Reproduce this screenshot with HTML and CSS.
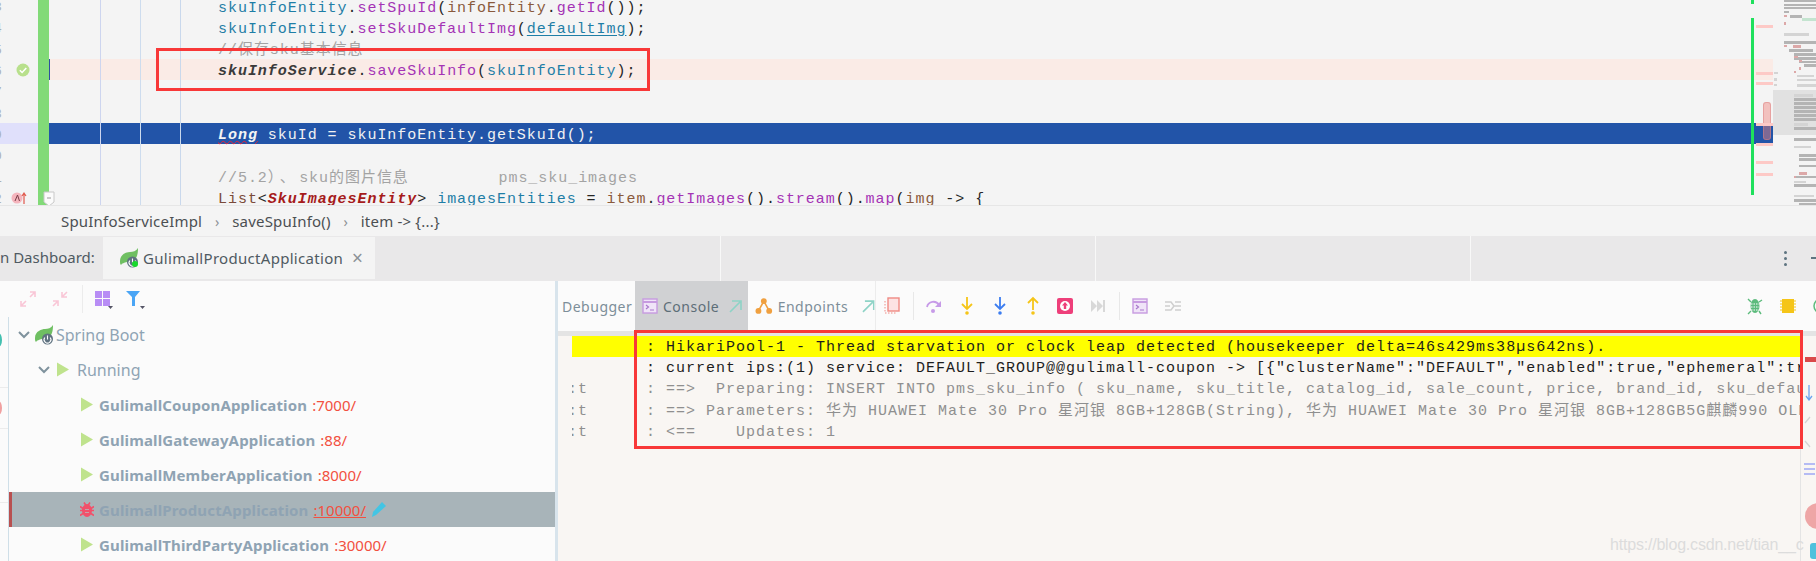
FILE: index.html
```html
<!DOCTYPE html>
<html lang="en">
<head>
<meta charset="utf-8">
<title>IDE debug session</title>
<link rel="stylesheet" href="styles.css">
</head>
<body>
<svg class="defs" width="0" height="0" aria-hidden="true">
  <defs>
    <symbol id="spring" viewBox="0 0 20 20">
      <path d="M1 13C1 6 8 4 11 4C14 4 17 3 19 0C19 6 18 10 15 12L8 14C5 15 3 15 2 17C1 16 1 15 1 13Z" fill="#6fbf62"/>
      <circle cx="13.5" cy="14" r="5.5" fill="#5f7280"/>
      <path d="M10.8 12.5a3.4 3.4 0 1 0 5.4 0M13.5 10.5v4" fill="none" stroke="#fff" stroke-width="1.1"/>
    </symbol>
    <symbol id="play" viewBox="0 0 14 16"><path d="M1 1L13 8L1 15Z" fill="#bfe38d"/></symbol>
    <symbol id="term" viewBox="0 0 16 16">
      <rect x="1" y="1" width="14" height="14" fill="#f0e4f8" stroke="#c79be0" stroke-width="1.4"/>
      <path d="M1 4h14" stroke="#c79be0" stroke-width="2"/>
      <path d="M4 7l2.5 2L4 11M8 12h4" fill="none" stroke="#a878cc" stroke-width="1.2"/>
    </symbol>
    <symbol id="pin" viewBox="0 0 14 14"><path d="M2 13L12 3M4 2h9v9" fill="none" stroke="#8ed3c6" stroke-width="1.6"/></symbol>
  </defs>
</svg>

<div class="app">
  <section class="editor">
    <div class="code">
      <div class="line"><span class="gutter"><span class="num">3</span></span><span class="change"></span><span class="src"><span class="id">skuInfoEntity</span>.<span class="fn">setSpuId</span>(<span class="var">infoEntity</span>.<span class="fn">getId</span>());</span></div>
      <div class="line"><span class="gutter"><span class="num">4</span></span><span class="change"></span><span class="src"><span class="id">skuInfoEntity</span>.<span class="fn">setSkuDefaultImg</span>(<span class="id link">defaultImg</span>);</span></div>
      <div class="line"><span class="gutter"><span class="num">5</span></span><span class="change"></span><span class="src"><span class="cmt">//保存sku基本信息</span></span></div>
      <div class="line is-break"><span class="gutter"><span class="num">6</span>
        <svg class="check" viewBox="0 0 14 14" width="14" height="14"><circle cx="7" cy="7" r="6.5" fill="#b8e08c"/><path d="M3.8 7.2l2.3 2.3 4.2-4.6" fill="none" stroke="#fff" stroke-width="1.5"/></svg>
      </span><span class="change"></span><span class="src"><i class="field">skuInfoService</i>.<span class="fn">saveSkuInfo</span>(<span class="id">skuInfoEntity</span>);</span></div>
      <div class="line"><span class="gutter"><span class="num">7</span></span><span class="change"></span><span class="src"></span></div>
      <div class="line"><span class="gutter"><span class="num">8</span></span><span class="change"></span><span class="src"></span></div>
      <div class="line is-current"><span class="gutter"><span class="num">9</span></span><span class="change"></span><span class="src"><i class="long">Long</i> skuId = skuInfoEntity.getSkuId();</span></div>
      <div class="line"><span class="gutter"><span class="num">0</span></span><span class="change"></span><span class="src"></span></div>
      <div class="line"><span class="gutter"><span class="num">1</span></span><span class="change"></span><span class="src"><span class="cmt">//5.2<span class="wide">）、</span>sku的图片信息         pms_sku_images</span></span></div>
      <div class="line"><span class="gutter"><span class="num">2</span>
        <svg class="lambda" viewBox="0 0 16 14" width="16" height="14"><circle cx="6" cy="7" r="5.5" fill="#f5b5bd"/><path d="M4 10l2.5-6 2 6" fill="none" stroke="#7a3b46" stroke-width="1"/><path d="M13 13V3M11 5l2-3 2 3" fill="none" stroke="#e0584c" stroke-width="1.2"/></svg>
      </span><span class="change"></span><span class="src"><span class="list">List</span>&lt;<i class="type">SkuImagesEntity</i>&gt; <span class="id">imagesEntities</span> = <span class="var">item</span>.<span class="fn">getImages</span>().<span class="fn">stream</span>().<span class="fn">map</span>(<span class="var">img</span> -&gt; {</span></div>
      <span class="guide guide-a"></span><span class="guide guide-b"></span><span class="guide guide-c"></span>
      <svg class="fold" viewBox="0 0 12 16" width="12" height="16"><path d="M1 1h10v10l-5 4-5-4Z" fill="#fbfbfb" stroke="#c8c8c8"/><path d="M4 7h4" stroke="#999"/></svg>
      <span class="thumb"></span>
      <span class="vcs"></span><span class="vcs vcs-top"></span>
      <span class="mark m1"></span><span class="mark m2"></span><span class="mark m3"></span><span class="mark m4"></span><span class="mark m5"></span><span class="mark m6"></span><span class="mark m7"></span>
    </div>
    <svg class="minimap" viewBox="0 0 43 206" width="43" height="206" aria-hidden="true">
      <rect y="90" width="43" height="45" fill="#e1e1e1"/>
      <g fill="#b4b4b4">
        <rect x="11" y="0" width="32" height="2"/><rect x="11" y="4" width="32" height="2"/><rect x="11" y="7" width="32" height="2"/>
        <rect x="11" y="11" width="5" height="2"/><rect x="17" y="15" width="12" height="3"/><rect x="11" y="41" width="32" height="3"/>
        <rect x="16" y="49" width="24" height="3"/><rect x="21" y="53" width="22" height="3"/><rect x="21" y="57" width="22" height="3"/>
        <rect x="26" y="61" width="17" height="2"/><rect x="31" y="64" width="12" height="3"/>
        <rect x="21" y="98" width="22" height="3"/><rect x="21" y="102" width="22" height="3"/><rect x="21" y="106" width="22" height="3"/>
        <rect x="21" y="110" width="22" height="3"/><rect x="21" y="114" width="22" height="3"/><rect x="21" y="118" width="22" height="3"/><rect x="21" y="127" width="22" height="3"/>
        <rect x="21" y="138" width="22" height="3"/><rect x="26" y="154" width="17" height="3"/><rect x="26" y="158" width="17" height="3"/><rect x="26" y="165" width="17" height="2"/>
        <rect x="21" y="176" width="22" height="2"/><rect x="21" y="184" width="22" height="3"/><rect x="21" y="199" width="22" height="3"/><rect x="26" y="203" width="17" height="3"/>
      </g>
      <g fill="#d4d4d4">
        <rect x="11" y="33" width="25" height="3"/><rect x="1" y="72" width="4" height="2"/><rect x="24" y="75" width="17" height="2"/>
        <rect x="1" y="78" width="3" height="3"/><rect x="24" y="79" width="19" height="2"/><rect x="1" y="84" width="3" height="2"/><rect x="24" y="84" width="19" height="3"/>
        <rect x="21" y="94" width="19" height="3"/><rect x="21" y="123" width="14" height="3"/><rect x="21" y="146" width="17" height="2"/><rect x="21" y="181" width="12" height="2"/><rect x="21" y="195" width="20" height="2"/>
      </g>
      <g fill="#dca8a8">
        <rect x="11" y="15" width="3" height="2"/><rect x="11" y="22" width="2" height="3"/><rect x="11" y="45" width="3" height="2"/><rect x="20" y="45" width="8" height="3"/>
        <rect x="21" y="56" width="4" height="2"/><rect x="26" y="60" width="3" height="2"/><rect x="26" y="67" width="2" height="3"/><rect x="21" y="71" width="2" height="2"/><rect x="26" y="172" width="8" height="3"/><rect x="21" y="176" width="2" height="2"/>
      </g>
      <rect x="29" y="18" width="14" height="3" fill="#c4e4d0"/>
    </svg>
  </section>

  <nav class="crumbs">
    <span>SpuInfoServiceImpl</span><b class="sep">›</b><span>saveSpuInfo()</span><b class="sep">›</b><span>item -&gt; {...}</span>
  </nav>

  <header class="tabs">
    <span class="dash-label">n Dashboard:</span>
    <div class="tab">
      <span class="spring-wrap"><svg class="ico-spring" width="20" height="20"><use href="#spring"/></svg><span class="live"></span></span>
      <span>GulimallProductApplication</span>
      <span class="tab-x">×</span>
    </div>
    <span class="kebab"><i></i><i></i><i></i></span>
    <span class="minimize"></span>
    <span class="tab-rule r1"></span><span class="tab-rule r2"></span><span class="tab-rule r3"></span>
  </header>

  <main class="bottom">
    <aside class="services">
      <div class="svc-bar">
        <svg width="20" height="20" viewBox="0 0 20 20" class="svc-ico"><path d="M3 17l5-5M3 12v5h5M17 3l-5 5M12 3h5v5" fill="none" stroke="#f9c6d6" stroke-width="1.6"/></svg>
        <svg width="20" height="20" viewBox="0 0 20 20" class="svc-ico ml12"><path d="M3 17l5-5M3 12h5v5M17 3l-5 5M12 3v5h5" fill="none" stroke="#f9c6d6" stroke-width="1.6"/></svg>
        <span class="svc-div"></span>
        <svg width="20" height="20" viewBox="0 0 20 20" class="svc-ico"><rect x="2" y="2" width="7" height="7" fill="#b88df5"/><rect x="10" y="2" width="7" height="7" fill="#b88df5"/><rect x="2" y="10" width="7" height="7" fill="#b88df5"/><rect x="10" y="10" width="7" height="7" fill="#b88df5"/><path d="M15 17h5l-2.500 3Z" fill="#556"/></svg>
        <svg width="20" height="20" viewBox="0 0 20 20" class="svc-ico ml12"><path d="M1 2h14l-5 6v9H7V8Z" fill="#4aa5f5"/><path d="M15 17h5l-2.500 3Z" fill="#556"/></svg>
      </div>
      <div class="svc-body">
        <div class="stripe"><span class="bit teal"></span><span class="bit red"></span></div>
        <ul class="tree">
          <li class="node lv0"><svg class="chev" width="12" height="8" viewBox="0 0 12 8"><path d="M1 1l5 5 5-5" fill="none" stroke="#7f929d" stroke-width="2"/></svg><svg class="ico-spring" width="20" height="20"><use href="#spring"/></svg><span class="node-t">Spring Boot</span></li>
          <li class="node lv1"><svg class="chev" width="12" height="8" viewBox="0 0 12 8"><path d="M1 1l5 5 5-5" fill="none" stroke="#7f929d" stroke-width="2"/></svg><svg class="ico-play" width="14" height="17"><use href="#play"/></svg><span class="node-t">Running</span></li>
          <li class="node lv2"><svg class="ico-play" width="14" height="17"><use href="#play"/></svg><span class="app-name">GulimallCouponApplication</span><span class="port">:7000/</span></li>
          <li class="node lv2"><svg class="ico-play" width="14" height="17"><use href="#play"/></svg><span class="app-name">GulimallGatewayApplication</span><span class="port">:88/</span></li>
          <li class="node lv2"><svg class="ico-play" width="14" height="17"><use href="#play"/></svg><span class="app-name">GulimallMemberApplication</span><span class="port">:8000/</span></li>
          <li class="node lv2 is-selected">
            <svg class="ico-play" width="14" height="17" viewBox="0 0 14 16"><path d="M0 5l3 2M14 5l-3 2M0 9h3M14 9h-3M0 14l3-2M14 14l-3-2M4 1l2 3M10 1l-2 3" stroke="#f2506a" stroke-width="1.6"/><ellipse cx="7" cy="9" rx="5" ry="6.500" fill="#f2506a"/><path d="M5 8h4M5 11h4" stroke="#c8a0a8"/></svg>
            <span class="app-name">GulimallProductApplication</span><span class="port port-link">:10000/</span>
            <svg class="pencil" width="16" height="17" viewBox="0 0 16 17"><path d="M1 16l1-5L11 1l4 4-10 9Z" fill="#43c5e4"/></svg>
          </li>
          <li class="node lv2"><svg class="ico-play" width="14" height="17"><use href="#play"/></svg><span class="app-name">GulimallThirdPartyApplication</span><span class="port">:30000/</span></li>
        </ul>
      </div>
    </aside>

    <section class="session">
      <div class="dbg-bar">
        <span class="dbg-tab t-debugger">Debugger</span>
        <span class="dbg-tab t-console"><svg width="16" height="16"><use href="#term"/></svg><span class="dbg-t">Console</span><svg class="pin" width="14" height="14"><use href="#pin"/></svg></span>
        <span class="dbg-tab t-endpoints">
          <svg width="18" height="18" viewBox="0 0 18 18"><circle cx="9" cy="4" r="3" fill="#f0a040"/><circle cx="3.500" cy="14" r="3" fill="#f0a040"/><circle cx="14.500" cy="14" r="3" fill="#f0a040"/><path d="M9 4L3.500 14M9 4l5.500 10" stroke="#f0a040" stroke-width="1.600"/></svg>
          <span class="dbg-t">Endpoints</span><svg class="pin pin2" width="14" height="14"><use href="#pin"/></svg></span>
        <span class="btn"><svg width="18" height="18" viewBox="0 0 18 18"><rect x="5" y="1" width="11" height="13" fill="#fde3e3" stroke="#ef8a84" stroke-width="1.400"/><path d="M2 4v12h12" fill="none" stroke="#ef8a84" stroke-dasharray="1.500 1.500"/></svg></span>
        <span class="bar-div"></span>
        <span class="btn"><svg width="18" height="16" viewBox="0 0 18 16"><path d="M2 9a6.500 6.500 0 0 1 12-2" fill="none" stroke="#c79be8" stroke-width="1.800"/><path d="M16 3v6h-6Z" fill="#c79be8"/><circle cx="8" cy="13" r="2" fill="#c79be8"/></svg></span>
        <span class="btn"><svg width="14" height="20" viewBox="0 0 14 20"><path d="M7 1v11M2 8l5 5 5-5" fill="none" stroke="#f5c518" stroke-width="1.800"/><circle cx="7" cy="17" r="1.800" fill="#f5c518"/></svg></span>
        <span class="btn"><svg width="14" height="20" viewBox="0 0 14 20"><path d="M7 1v11M2 8l5 5 5-5" fill="none" stroke="#3c7df0" stroke-width="1.800"/><circle cx="7" cy="17" r="1.800" fill="#3c7df0"/></svg></span>
        <span class="btn"><svg width="14" height="20" viewBox="0 0 14 20"><path d="M7 14V3M2 7l5-5 5 5" fill="none" stroke="#f5c518" stroke-width="1.800"/><circle cx="7" cy="17" r="1.800" fill="#f5c518"/></svg></span>
        <span class="btn"><svg width="16" height="16" viewBox="0 0 16 16"><rect width="16" height="16" rx="2" fill="#ee3f7a"/><circle cx="8" cy="8" r="5" fill="#fff"/><path d="M8 4l3 3.500H9.200V11H6.800V7.500H5Z" fill="#ee3f7a"/></svg></span>
        <span class="btn"><svg width="14" height="14" viewBox="0 0 14 14"><path d="M0 1l6 6-6 6ZM6 1l6 6-6 6Z" fill="#d8d8d8"/><rect x="12" y="1" width="2" height="12" fill="#d8d8d8"/></svg></span>
        <span class="bar-div"></span>
        <span class="btn"><svg width="16" height="16"><use href="#term"/></svg></span>
        <span class="btn"><svg width="16" height="14" viewBox="0 0 16 14"><path d="M0 3h6l3 4h7M0 11h6l3-4M10 3h6M10 11h6M0 7h5" fill="none" stroke="#cfcfcf" stroke-width="1.500"/></svg></span>
        <span class="bar-right">
          <span class="btn"><svg width="16" height="20" viewBox="0 0 16 20"><ellipse cx="8" cy="10" rx="4.500" ry="7" fill="#5cbb7c"/><path d="M4 6l-3-3M12 6l3-2M4 15l-3 3M12 15l2 3" stroke="#5cbb7c" stroke-width="1.400"/><path d="M4 8h8M4 11h8M4 14h8" stroke="#fff" stroke-dasharray="1.500 1"/></svg></span>
          <span class="btn"><svg width="16" height="16" viewBox="0 0 16 16"><rect x="2" y="1" width="12" height="14" fill="#f5c518"/><path d="M0 3h2M0 6h2M0 9h2M0 12h2M14 3h2M14 6h2M14 9h2M14 12h2" stroke="#f5c518"/></svg></span>
          <span class="btn"><svg width="16" height="16" viewBox="0 0 16 16"><circle cx="8" cy="8" r="7" fill="none" stroke="#5cbb7c" stroke-width="1.500"/><path d="M8 4v4l3 2" fill="none" stroke="#5cbb7c"/></svg></span>
        </span>
      </div>
      <div class="console">
        <div class="log-wrap">
          <pre class="log hit"><span class="pref"></span>: HikariPool-1 - Thread starvation or clock leap detected (housekeeper delta=46s429ms38µs642ns).</pre>
          <pre class="log"><span class="pref"></span>: current ips:(1) service: DEFAULT_GROUP@@gulimall-coupon -&gt; [{"clusterName":"DEFAULT","enabled":true,"ephemeral":true</pre>
          <pre class="log dim"><span class="pref">:t</span>: ==&gt;  Preparing: INSERT INTO pms_sku_info ( sku_name, sku_title, catalog_id, sale_count, price, brand_id, sku_default_img</pre>
          <pre class="log dim"><span class="pref">:t</span>: ==&gt; Parameters: 华为 HUAWEI Mate 30 Pro 星河银 8GB+128GB(String), 华为 HUAWEI Mate 30 Pro 星河银 8GB+128GB5G麒麟990 OLED</pre>
          <pre class="log dim"><span class="pref">:t</span>: &lt;==    Updates: 1</pre>
        </div>
        <div class="side">
          <span class="side-red"></span>
          <svg class="side-ico" width="8" height="16" viewBox="0 0 8 16"><path d="M4 0v14M1 11l3 4 3-4" fill="none" stroke="#6aa5f0" stroke-width="1.300"/></svg>
          <svg class="side-ico" width="10" height="10" viewBox="0 0 10 10"><path d="M1 8l5-6" fill="none" stroke="#d4d4d4" stroke-width="1.300"/></svg>
          <svg class="side-ico" width="10" height="10" viewBox="0 0 10 10"><path d="M1 2l5 6" fill="none" stroke="#d4d4d4" stroke-width="1.300"/></svg>
          <svg class="side-ico" width="12" height="12" viewBox="0 0 12 12"><path d="M1 1h11M1 6h11M1 11h11" stroke="#9ea8f5" stroke-width="1.500"/></svg>
          <span class="side-dot"></span>
          <span class="side-teal"></span>
        </div>
      </div>
    </section>
  </main>
  <span class="callout call-a"></span>
  <span class="callout call-b"></span>
  <span class="wm">https://blog.csdn.net/tian__c</span>
</div>
</body>
</html>
```
FILE: styles.css
```css
* { box-sizing: border-box; }
html, body { margin: 0; padding: 0; background: #f4f4f4; }
.defs { position: absolute; }
.app {
  position: relative; width: 1816px; height: 561px; overflow: hidden;
  display: flex; flex-direction: column;
  font-family: "Noto Sans", "Noto Sans CJK SC", sans-serif;
}
i { font-style: italic; }

/* editor */
.editor { height: 206px; flex: none; display: flex; overflow: hidden; border-bottom: 1px solid #e6e6e6; background: #f4f4f4; }
.code {
  position: relative; width: 1773px; flex: none; padding-top: 0; margin-top: -5px;
  font: 15px/21.33px "Liberation Mono", "Noto Sans CJK SC", monospace;
  letter-spacing: .96px; color: #262626;
}
.line { height: 21.33px; display: flex; white-space: pre; }
.gutter { width: 38px; flex: none; position: relative; overflow: hidden; color: #aab0b4; font-size: 13px; }
.num { position: absolute; left: -6px; top: 2px; }
.check { position: absolute; left: 16px; top: 4px; }
.lambda { position: absolute; left: 11px; top: 4px; }
.change { width: 11px; flex: none; background: #82da78; }
.src { flex: 1; padding: 2.5px 0 0 169px; line-height: 21px; }
.is-break .src { background: #faebe6; }
.is-current .gutter { background: #e0e0fb; }
.is-current .src { background: #2254a8; color: #f2f2f2; }
.id { color: #1f7ea6; }
.fn { color: #a433b5; }
.var { color: #8a5a3c; }
.cmt { color: #a3a3a3; }
.wide { letter-spacing: 4.4px; }
.list { color: #7a4a3a; }
.link { text-decoration: underline; text-underline-offset: 2px; }
.field { color: #3a3a3a; font-weight: 700; }
.type { color: #a61b1b; font-weight: 700; }
.long { color: #f4f4f4; font-weight: 700; text-decoration: underline wavy #e23; text-decoration-thickness: 1px; }
.guide { position: absolute; top: 0; bottom: 0; width: 1px; }
.guide-a { left: 100px; background: #cdd5ef; }
.guide-b { left: 140px; background: #cddcee; }
.guide-c { left: 180px; background: #c9d8ec; }
.is-break .change + .src { box-shadow: inset 7px 0 0 -6px #2f4f9f; }
.fold { position: absolute; left: 43px; top: 196px; }
.thumb { position: absolute; left: 1763px; top: 107px; width: 8px; height: 38px; border-radius: 3px; background: rgba(240, 130, 125, .45); border: 1px solid rgba(220,130,130,.5); }
.vcs { position: absolute; left: 1751px; top: 23px; width: 3px; height: 177px; background: #1fe05c; }
.vcs-top { top: 0; height: 9px; }
.mark { position: absolute; left: 1756px; width: 17px; height: 3px; background: #fdc9c6; }
.m1 { top: 30px; } .m2 { top: 77px; } .m3 { top: 87px; } .m4 { top: 128px; } .m5 { top: 148px; } .m6 { top: 166px; } .m7 { top: 178px; }
.minimap { flex: none; }

/* breadcrumbs */
.crumbs { height: 30px; flex: none; display: flex; align-items: center; padding-left: 61px; background: #f4f4f4; font-size: 15px; letter-spacing: .2px; color: #4b4f52; }
.sep { width: 30px; text-align: center; font-weight: 400; color: #8d9194; font-size: 14px; }

/* tabs */
.tabs { position: relative; height: 45px; flex: none; display: flex; align-items: flex-start; background: #e9e8e9; font-size: 15px; color: #4f5a62; }
.dash-label { width: 103px; white-space: nowrap; height: 42px; line-height: 42px; overflow: hidden; }
.tab { width: 272px; height: 42px; margin-top: 1px; background: #f4f4f4; display: flex; align-items: center; padding-left: 16px; letter-spacing: .3px; }
.spring-wrap { position: relative; width: 24px; height: 20px; }
.live { position: absolute; left: 13px; top: 13px; width: 6px; height: 6px; border-radius: 50%; background: #18d82c; }
.tab-x { margin-left: 9px; font-size: 19px; color: #8b9196; line-height: 1; }
.kebab { position: absolute; left: 1784px; top: 15px; display: flex; flex-direction: column; gap: 3px; }
.kebab i { width: 3px; height: 3px; border-radius: 50%; background: #5e7480; display: block; }
.minimize { position: absolute; left: 1811px; top: 21px; width: 5px; height: 2px; background: #5e7480; }
.tab-rule { position: absolute; top: 0; bottom: 0; width: 1px; background: #f8f8f8; }
.r1 { left: 720px; } .r2 { left: 1095px; } .r3 { left: 1470px; }

/* bottom */
.bottom { flex: 1; display: flex; min-height: 0; background: #fbfbfb; }
.services { width: 558px; flex: none; border-right: 3px solid #d8e4ec; display: flex; flex-direction: column; }
.svc-bar { height: 36px; flex: none; display: flex; align-items: center; padding-left: 18px; }
.ml12 { margin-left: 12px; }
.svc-div { width: 1px; height: 28px; background: #ececec; margin: 0 10px 0 12px; }
.svc-body { flex: 1; display: flex; min-height: 0; }
.stripe {
  width: 9px; flex: none; border-right: 1px solid #cfdfe8; position: relative;
  background:
    linear-gradient(#ececec, #ececec) 0 70px / 100% 1px no-repeat,
    linear-gradient(#ececec, #ececec) 0 111px / 100% 1px no-repeat,
    linear-gradient(#ececec, #ececec) 0 185px / 100% 1px no-repeat;
}
.bit { position: absolute; left: -5px; width: 7px; height: 14px; border-radius: 50%; border: 2px solid; }
.teal { top: 16px; border-color: #43c0b0; }
.red { top: 84px; border-color: #f0a0a0; }
.tree { list-style: none; margin: 0; padding: 0; flex: 1; }
.node { height: 35px; display: flex; align-items: center; font-size: 15px; white-space: nowrap; }
.node svg { flex: none; }
.lv0 { padding-left: 9px; }
.lv1 { padding-left: 29px; }
.lv2 { padding-left: 71px; }
.chev { margin-right: 4px; }
.lv1 .chev { margin-right: 6px; }
.lv1 .ico-play { margin-right: 7px; }
.lv2 .ico-play { margin-right: 5px; }
.lv0 .node-t { margin-left: 2px; }
.node-t { color: #8fa4b4; font-size: 16px; }
.app-name { color: #8fa3b3; font-weight: 700; font-size: 15px; letter-spacing: .14px; }
.port { color: #f2503f; margin-left: 5px; font-size: 15px; }
.is-selected { background: #a8b4b9; border-left: 3px solid #b85050; padding-left: 68px; }
.port-link { text-decoration: underline; }
.pencil { margin-left: 5px; }

/* debugger */
.session { flex: 1; min-width: 0; display: flex; flex-direction: column; }
.dbg-bar { height: 50px; flex: none; display: flex; align-items: center; overflow: hidden; font-size: 14px; color: #7d8e99; letter-spacing: .5px; }
.dbg-tab { height: 100%; display: flex; align-items: center; flex: none; white-space: nowrap; }
.t-debugger { width: 77px; padding-left: 4px; }
.t-console { width: 113px; background: #d0d1d3; padding-left: 7px; color: #5d6e78; }
.t-endpoints { width: 128px; padding-left: 7px; border-right: 1px solid #ececec; }
.dbg-t { margin-left: 5px; }
.pin { margin-left: 9px; }
.pin2 { margin-left: 13px; }
.btn { width: 32.8px; flex: none; display: flex; justify-content: center; align-items: center; }
.bar-div { width: 1px; height: 28px; flex: none; background: #e8e8e8; margin: 0 4px; }
.bar-right { margin-left: auto; margin-right: -21px; display: flex; flex: none; }

.console { flex: 1; min-height: 0; display: flex; background: #f9f6f3; border-top: 5px solid #e4e4e4; }
.log-wrap { width: 1228px; flex: none; margin-left: 14px; overflow: hidden; }
.log {
  margin: 0; height: 21.2px; padding-top: 2px; white-space: pre; overflow: hidden;
  font: 15px/19.2px "Liberation Mono", "Noto Sans CJK SC", monospace;
  letter-spacing: 1px; color: #1d1d1d;
}
.pref { display: inline-block; width: 78px; margin-left: -4px; color: #8f8f8f; vertical-align: top; }
.hit { background: #ffff00; }
.dim { color: #8f8f8f; }
.side { flex: 1; border-left: 1px solid #e4e4e4; background: #f9f6f3; display: flex; flex-direction: column; align-items: center; position: relative; padding-top: 21px; gap: 14px; overflow: hidden; }
.side-red { width: 12px; height: 5px; margin-left: 4px; background: #d94a4a; flex: none; }
.side-ico { flex: none; }
.side-ico:nth-of-type(1) { margin-top: 9px; }
.side-dot { position: absolute; left: 4px; top: 167px; width: 26px; height: 26px; border-radius: 50%; background: #eea6a6; }
.side-teal { position: absolute; left: 9px; top: 207px; width: 12px; height: 16px; border-radius: 3px; background: #4fc1dc; }

/* overlays */
.callout { position: absolute; border: 3px solid #f83838; }
.call-a { left: 156px; top: 48px; width: 494px; height: 43px; }
.call-b { left: 634px; top: 330px; width: 1169px; height: 119px; }
.wm { position: absolute; left: 1610px; top: 534px; font: 16px/22px "Liberation Sans", sans-serif; letter-spacing: -.2px; color: #dcdcdc; }
```
